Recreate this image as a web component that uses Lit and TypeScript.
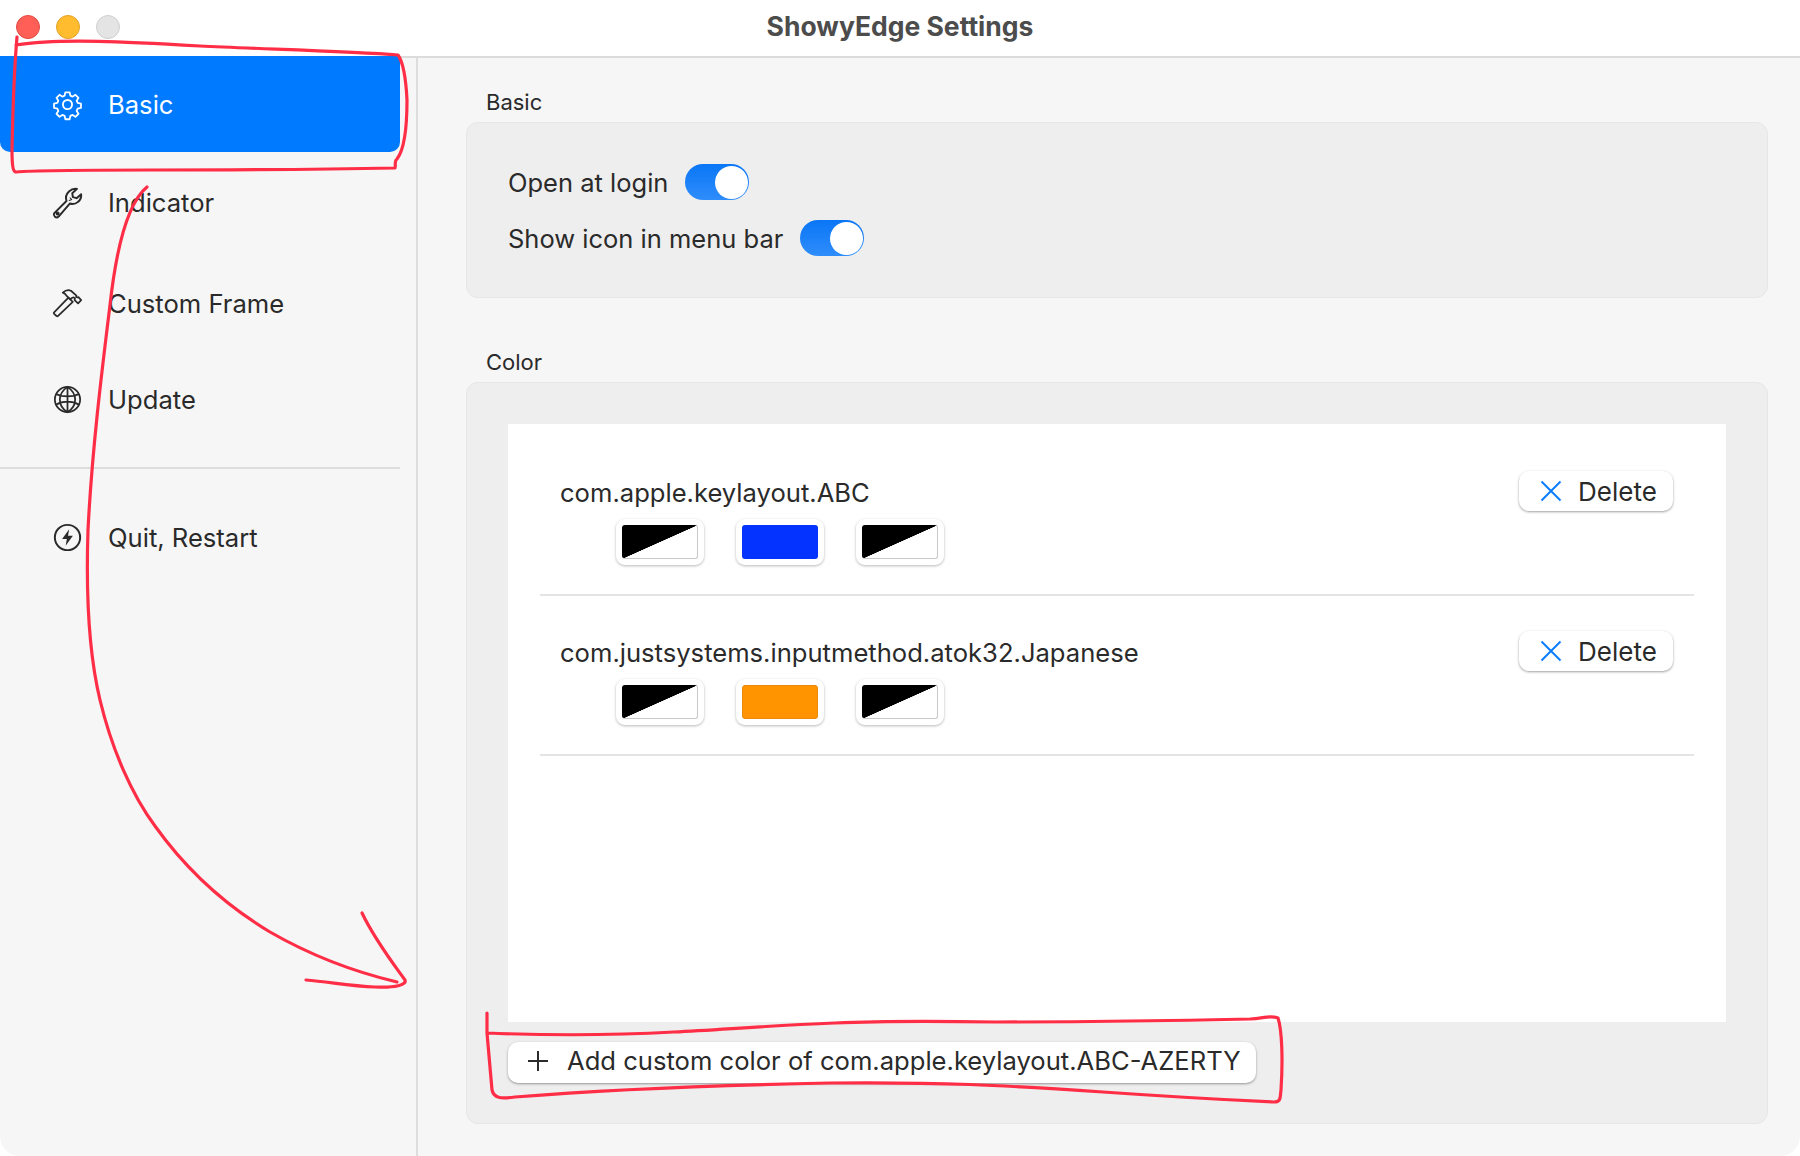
import { LitElement, html, css, svg } from "lit";
import { customElement } from "lit/decorators.js";

const gear = html`<svg class="ico" viewBox="0 0 28 28" fill="none" stroke="currentColor" stroke-width="1.8" stroke-linejoin="round"><path d="M11.8 1.6h4.4l.7 3.4 2.3 1 2.9-1.9 3.1 3.1-1.9 2.9 1 2.3 3.4.7v4.4l-3.4.7-1 2.3 1.9 2.9-3.1 3.1-2.9-1.9-2.3 1-.7 3.400h-4.400l-.7-3.400-2.300-1-2.900 1.900-3.100-3.100 1.900-2.900-1-2.300-3.400-.7v-4.400l3.400-.7 1-2.300-1.900-2.900 3.100-3.100 2.900 1.900 2.300-1z" transform="translate(.7 .7) scale(.95)"/><circle cx="14" cy="14" r="4.400"/></svg>`;
const wrench = html`<svg class="ico wide" viewBox="0 0 30 30" fill="none" stroke="currentColor" stroke-width="1.9" stroke-linejoin="round" stroke-linecap="round"><path d="M2 25.500 14 13.600c-1.200-3.600-.2-6.800 2.400-9.300 2.200-2 5-3 7.800-2.500l-4.600 4.200.6 3.800 3.600 1 4.400-3.800c.3 2.800-.8 5.600-3 7.400-2.400 2.100-5.200 2.600-8 1.600L6.400 28.600c-1 1-2.600 1-3.600.2-1.200-1-1.200-2.300-.8-3.300z"/><circle cx="5.400" cy="25.600" r="1" fill="currentColor"/><path d="M17.500 10.500l1.600 1.600M16.600 13l2-.6" stroke-width="1"/></svg>`;
const hammer = html`<svg class="ico wide" viewBox="0 0 34 34" fill="none" stroke="currentColor" stroke-width="1.9" stroke-linejoin="round" stroke-linecap="round"><path d="M2.300 26.700 18 10.500l4.800 4.800L6.700 30.700a1.200 1.200 0 0 1-1.700 0l-2.700-2.400a1.100 1.100 0 0 1 0-1.600z"/><path d="M18 10.500 15.800 8.300c-.8-1.600-2-2.600-4-3.300 3-2.600 6.200-3.200 9-2l6 5.300-.3 1.500 1.500.6 1-.4 3 3.300-3.400 3.500-3.800-3.600.4-1.700-1.400-1.300-2 .8-1.800 1.500z"/></svg>`;
const globe = html`<svg class="ico" viewBox="0 0 28 28" fill="none" stroke="currentColor" stroke-width="1.7"><circle cx="14" cy="14" r="12.200"/><path d="M14 1.800C9 5.200 6.600 9.400 6.600 14S9 23.200 14 26.200c5-3 7.400-7.600 7.400-12.200S19 5.200 14 1.800zM14 1.800v24.400M3 8.800c3.400 1.600 7 2.200 11 2.200s7.600-.6 11-2.200M2.800 19c3.600-2.200 7.200-3 11.200-3s7.600.8 11.200 3"/></svg>`;
const bolt = html`<svg class="ico" viewBox="0 0 28 28" fill="none" stroke="currentColor" stroke-width="1.9"><circle cx="14" cy="14" r="12.200"/><path d="M15.600 6 8.800 15.400h4.600L12.200 22l7-9.600h-4.700z" fill="currentColor" stroke="none"/></svg>`;
const cross = html`<svg class="x" viewBox="0 0 22 22" fill="none" stroke="#0a7dff" stroke-width="2"><path d="M1.500 1.500l19 19M20.500 1.500l-19 19"/></svg>`;
const plus = html`<svg class="plus" viewBox="0 0 22 22" fill="none" stroke="#2b2b2b" stroke-width="2"><path d="M11 1v20M1 11h20"/></svg>`;

const nav = [
  { icon: gear, label: "Basic", active: true },
  { icon: wrench, label: "Indicator" },
  { icon: hammer, label: "Custom Frame" },
  { icon: globe, label: "Update" },
];

const rows = [
  { name: "com.apple.keylayout.ABC", color: "blue" },
  { name: "com.justsystems.inputmethod.atok32.Japanese", color: "orange" },
];

const ink = svg`
  <path d="M17 37 C15 60 13 100 12 150 C12 165 13 172 16 172 C60 168 200 172 395 168 C396 165 394 161 397 159 C404 150 407 130 407 100 C406 80 403 62 398 55 C350 51 260 49 200 46 C130 42 60 38 16 45"/>
  <path d="M147 187 C125 205 115 260 110 305 C102 370 92 450 88 530 C86 590 88 650 100 700 C112 750 132 795 155 826 C185 868 225 905 270 932 C310 955 355 972 397 982"/>
  <path d="M362 913 C375 940 392 962 405 980 C407 985 395 988 375 987 C350 986 330 982 306 980"/>
  <path d="M487 1013 L487 1033 L492 1090 C494 1098 500 1099 515 1097 C600 1090 728 1085 830 1083 C942 1082 1000 1085 1103 1092 C1160 1096 1230 1100 1274 1102 C1281 1102 1280 1098 1281 1090 C1283 1060 1282 1030 1278 1018 C1270 1015 1265 1018 1250 1019 C1160 1021 1080 1022 996 1022 C930 1021 880 1021 835 1023 C760 1026 720 1030 674 1032 C620 1035 560 1036 487 1033"/>
`;

@customElement("app-root")
export class AppRoot extends LitElement {
  static styles = css`
    :host {
      display: block;
      position: relative;
      width: 1800px;
      height: 1156px;
      background: #fff;
      font-family: Inter, "Liberation Sans", sans-serif;
      color: #2a2a2a;
      overflow: hidden;
    }
    .window {
      display: flex;
      flex-direction: column;
      height: 100%;
      border-radius: 0 0 20px 20px;
      overflow: hidden;
      background: #f6f6f6;
    }
    .titlebar {
      flex: none;
      display: flex;
      align-items: center;
      justify-content: center;
      height: 58px;
      padding-bottom: 4px;
      background: #fff;
      border-bottom: 2px solid #dcdcdc;
      box-sizing: border-box;
      font-size: 26.5px;
      font-weight: 700;
      color: #4c4c4c;
    }
    .lights {
      position: absolute;
      left: 16px;
      top: 15px;
      display: flex;
      gap: 16px;
    }
    .light {
      width: 24px;
      height: 24px;
      border-radius: 50%;
      box-sizing: border-box;
      border: 1px solid;
    }
    .red { background: #ff5f57; border-color: #e24b43; }
    .yellow { background: #febc2e; border-color: #e1a325; }
    .grey { background: #e4e4e4; border-color: #cfcfcf; }
    .body {
      flex: 1;
      display: flex;
      min-height: 0;
    }
    .sidebar {
      flex: none;
      width: 418px;
      box-sizing: border-box;
      padding-right: 16px;
      border-right: 2px solid #dddddd;
    }
    .item {
      display: flex;
      align-items: center;
      height: 96px;
      margin-bottom: 3px;
      padding-left: 53px;
      gap: 26px;
      font-size: 25.6px;
    }
    .item.active {
      background: #007aff;
      color: #fff;
      border-radius: 0 0 10px 10px;
      margin-top: -2px;
      margin-bottom: 2px;
    }
    .item:nth-child(2) { margin-bottom: 5px; }
    .item:nth-child(3) { margin-bottom: 0; }
    .ico { width: 29px; height: 29px; flex: none; overflow: visible; }
    .ico.wide { width: 31px; height: 31px; margin: 0 -1px; }
    .divider {
      height: 2px;
      background: #dedede;
      margin: 20px 0 20px;
    }
    .main {
      flex: 1;
      box-sizing: border-box;
      padding: 0 32px 32px 48px;
      display: flex;
      flex-direction: column;
    }
    .legend {
      font-size: 22px;
      line-height: 26px;
      margin: 31px 0 7px 20px;
    }
    .legend.second { margin-top: 51px; }
    .box {
      background: #eeeeee;
      border: 1px solid #e6e6e6;
      border-radius: 12px;
      box-sizing: border-box;
    }
    .basic {
      height: 176px;
      padding: 41px;
      display: flex;
      flex-direction: column;
      gap: 20px;
    }
    .toggle-row {
      display: flex;
      align-items: center;
      gap: 17px;
      height: 36px;
      font-size: 25.5px;
    }
    .toggle {
      width: 64px;
      height: 36px;
      border-radius: 18px;
      box-sizing: border-box;
      display: flex;
      justify-content: flex-end;
      align-items: center;
      padding-right: 1.5px;
      background: linear-gradient(#0a76f6, #2f8dfb);
    }
    .knob {
      width: 33px;
      height: 33px;
      border-radius: 50%;
      background: #fff;
    }
    .color {
      flex: 1;
      min-height: 0;
      padding: 41px 41px 40px;
      display: flex;
      flex-direction: column;
      gap: 20px;
    }
    .list {
      flex: 1;
      background: #fff;
      padding: 12px 32px 0;
    }
    .row {
      height: 160px;
      box-sizing: border-box;
      border-bottom: 2px solid #e4e4e4;
      padding: 34px 20px 0;
      display: flex;
      justify-content: space-between;
      align-items: flex-start;
    }
    .name {
      font-size: 25.6px;
      line-height: 44px;
      margin-top: 1px;
    }
    .swatches {
      display: flex;
      gap: 32px;
      margin: 4px 0 0 56px;
    }
    .swatch {
      width: 88px;
      height: 46px;
      box-sizing: border-box;
      padding: 6px;
      background: #fff;
      border-radius: 9px;
      box-shadow: 0 1px 3px rgba(0, 0, 0, 0.28);
    }
    .fill {
      height: 100%;
      border-radius: 3px;
      box-sizing: border-box;
    }
    .fill.split {
      border-right: 1px solid #c9c9c9;
      border-bottom: 1px solid #c9c9c9;
      background: linear-gradient(to bottom right, #000 0 49.6%, #fff 50.4% 100%) border-box;
    }
    .fill.blue { background: #0433ff; }
    .fill.orange { background: #ff9300; border: 1px solid #e98a0a; }
    .btn {
      display: flex;
      align-items: center;
      background: #fff;
      border-radius: 10px;
      box-shadow: 0 1px 2.5px rgba(0, 0, 0, 0.38);
      box-sizing: border-box;
    }
    .delete {
      width: 154px;
      height: 40px;
      padding-left: 21px;
      gap: 16px;
      font-size: 26px;
      margin: 1px 1px 0 0;
    }
    .x { width: 22px; height: 22px; flex: none; }
    .add {
      flex: none;
      align-self: flex-start;
      width: 748px;
      height: 41px;
      padding: 0 0 4px 19px;
      gap: 18px;
      font-size: 25.6px;
      white-space: nowrap;
    }
    .plus { width: 22px; height: 22px; flex: none; }
    .ink {
      position: absolute;
      inset: 0;
      width: 1800px;
      height: 1156px;
      pointer-events: none;
      fill: none;
      stroke: #ff2d46;
      stroke-width: 3.2;
      stroke-linecap: round;
      stroke-linejoin: round;
    }
  `;

  render() {
    return html`
      <div class="window">
        <header class="titlebar">
          <div class="lights">
            <span class="light red"></span>
            <span class="light yellow"></span>
            <span class="light grey"></span>
          </div>
          ShowyEdge Settings
        </header>
        <div class="body">
          <nav class="sidebar">
            ${nav.map(
              (n) => html`<div class="item ${n.active ? "active" : ""}">${n.icon}<span>${n.label}</span></div>`
            )}
            <div class="divider"></div>
            <div class="item">${bolt}<span>Quit, Restart</span></div>
          </nav>
          <main class="main">
            <div class="legend">Basic</div>
            <section class="box basic">
              <div class="toggle-row">Open at login <span class="toggle"><span class="knob"></span></span></div>
              <div class="toggle-row">Show icon in menu bar <span class="toggle"><span class="knob"></span></span></div>
            </section>
            <div class="legend second">Color</div>
            <section class="box color">
              <div class="list">
                ${rows.map(
                  (r) => html`<div class="row">
                    <div>
                      <div class="name">${r.name}</div>
                      <div class="swatches">
                        <div class="swatch"><div class="fill split"></div></div>
                        <div class="swatch"><div class="fill ${r.color}"></div></div>
                        <div class="swatch"><div class="fill split"></div></div>
                      </div>
                    </div>
                    <div class="btn delete">${cross}<span>Delete</span></div>
                  </div>`
                )}
              </div>
              <div class="btn add">${plus}<span>Add custom color of com.apple.keylayout.ABC-AZERTY</span></div>
            </section>
          </main>
        </div>
      </div>
      <svg class="ink" viewBox="0 0 1800 1156">${ink}</svg>
    `;
  }
}
